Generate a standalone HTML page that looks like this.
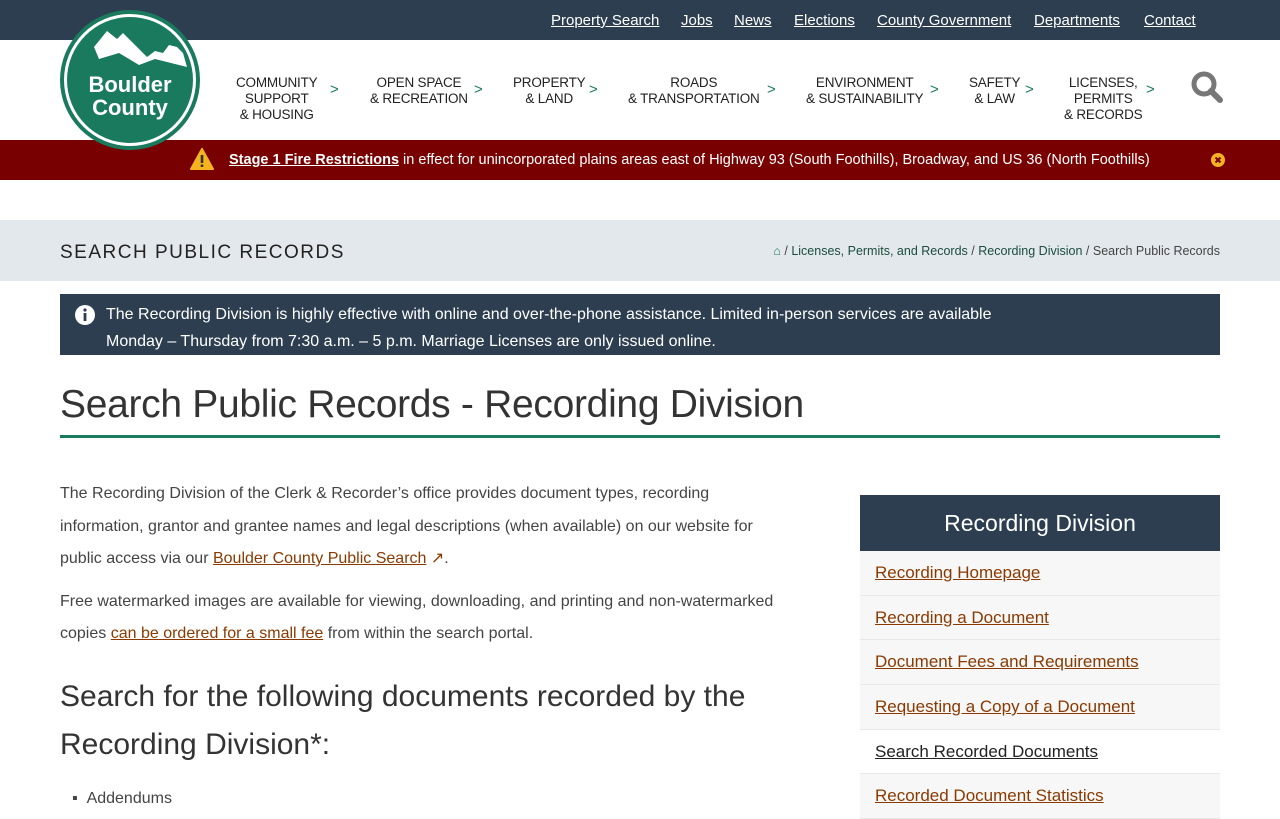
<!DOCTYPE html>
<html><head><meta charset="utf-8"><style>
*{margin:0;padding:0;box-sizing:border-box}
body{width:1280px;height:800px;overflow:hidden;font-family:"Liberation Sans",sans-serif;color:#333;background:#fff;position:relative}
a{color:inherit}
.top{height:40px;background:#2c3e4f;position:relative}
.top a{position:absolute;top:12px;color:#fff;font-size:15px;text-decoration:underline}
.nav{height:100px;position:relative}
.nav .it{position:absolute;top:35px;font-size:13.5px;color:#222;text-align:center;line-height:16px;letter-spacing:-.2px}
.nav .ch{position:absolute;top:41px;color:#1a7a5e;font-size:15px}
.alert{height:40px;background:#780000;color:#fff;position:relative;font-size:14.5px}
.hero{position:absolute;top:220px;left:0;width:1280px;height:61px;background:#e3e8ed}
.hero h2{position:absolute;left:60px;top:22px;font-weight:normal;font-size:19px;letter-spacing:1.5px;color:#222}
.bc{position:absolute;right:60px;top:24px;font-size:12.5px;color:#444}
.bc a{color:#1b4d3e}
.info{position:absolute;left:60px;top:294px;width:1160px;height:61px;background:#2c3e4f;color:#fff;font-size:16px;line-height:27px;padding:7px 0 0 46px}
h1{position:absolute;left:60px;top:383px;font-weight:normal;font-size:39px;color:#333;letter-spacing:-.3px}
.rule{position:absolute;left:60px;top:435px;width:1160px;height:3px;background:#1a7a5e}
.main{position:absolute;left:60px;top:478px;width:735px;font-size:16px;line-height:32.5px;color:#444}
.main a{color:#8a3a00}
.main h3{font-weight:normal;font-size:30px;line-height:48px;color:#333;margin-top:22px}
.side{position:absolute;left:860px;top:495px;width:360px}
.side .hd{height:56px;background:#2c3e4f;color:#fff;font-size:23px;text-align:center;line-height:56px}
.side .li{height:44.7px;border-bottom:1px solid #e8e8e8;background:#f7f7f7;padding-left:15px;font-size:17px;line-height:44px;color:#8a3a00}
.side .li a{text-decoration:underline}
.side .cur{background:#fff;color:#222}
</style></head><body>
<div class="top">
<a style="left:551px">Property Search</a><a style="left:681px">Jobs</a><a style="left:734px">News</a><a style="left:794px">Elections</a><a style="left:877px">County Government</a><a style="left:1034px">Departments</a><a style="left:1144px">Contact</a>
</div>
<div class="nav">
<div class="it" style="left:236px;top:35px">COMMUNITY<br>SUPPORT<br>&amp; HOUSING</div><span class="ch" style="left:330px">&gt;</span>
<div class="it" style="left:370px">OPEN SPACE<br>&amp; RECREATION</div><span class="ch" style="left:474px">&gt;</span>
<div class="it" style="left:513px">PROPERTY<br>&amp; LAND</div><span class="ch" style="left:589px">&gt;</span>
<div class="it" style="left:628px">ROADS<br>&amp; TRANSPORTATION</div><span class="ch" style="left:767px">&gt;</span>
<div class="it" style="left:806px">ENVIRONMENT<br>&amp; SUSTAINABILITY</div><span class="ch" style="left:930px">&gt;</span>
<div class="it" style="left:969px">SAFETY<br>&amp; LAW</div><span class="ch" style="left:1025px">&gt;</span>
<div class="it" style="left:1064px">LICENSES,<br>PERMITS<br>&amp; RECORDS</div><span class="ch" style="left:1146px">&gt;</span>
<svg style="position:absolute;left:1190px;top:30px" width="34" height="34" viewBox="0 0 34 34"><circle cx="14" cy="14" r="10" fill="none" stroke="#777" stroke-width="5"/><path d="M21 21 L30 30" stroke="#777" stroke-width="6" stroke-linecap="round"/></svg>
</div>
<div class="alert">
<svg style="position:absolute;left:190px;top:8px" width="24" height="22" viewBox="0 0 24 22"><path d="M12 1 L23 21 L1 21Z" fill="#f5b320" stroke="#f5b320" stroke-linejoin="round" stroke-width="2"/><rect x="10.7" y="7" width="2.6" height="8" fill="#333"/><rect x="10.7" y="16.5" width="2.6" height="2.5" fill="#333"/></svg>
<div style="position:absolute;left:229px;top:12px;white-space:nowrap"><b style="text-decoration:underline">Stage 1 Fire Restrictions</b> in effect for unincorporated plains areas east of Highway 93 (South Foothills), Broadway, and US 36 (North Foothills)</div>
<svg style="position:absolute;left:1211px;top:13px" width="14" height="14"><circle cx="7" cy="7" r="7" fill="#f5b320"/><path d="M4.5 4.5L9.5 9.5M9.5 4.5L4.5 9.5" stroke="#780000" stroke-width="2"/></svg>
</div>
<svg style="position:absolute;left:59px;top:9px;z-index:5" width="142" height="142" viewBox="0 0 142 142">
<circle cx="71" cy="71" r="70" fill="#1a7a5e"/><circle cx="71" cy="71" r="66" fill="#fff"/><circle cx="71" cy="71" r="63" fill="#1a7a5e"/>
<path d="M35 38 L48 22 L58 30 L64 24 L88 48 L96 42 L104 44 L110 36 L118 38 L124 44 L128 58 L96 50 L80 56 L60 44 L40 50 Z" fill="#fff"/>
<text x="71" y="83" font-family="Liberation Sans" font-weight="bold" font-size="22" fill="#fff" text-anchor="middle">Boulder</text>
<text x="71" y="106" font-family="Liberation Sans" font-weight="bold" font-size="22" fill="#fff" text-anchor="middle">County</text>
</svg>
<div class="hero"><h2>SEARCH PUBLIC RECORDS</h2>
<div class="bc"><span style="color:#1a7a5e">&#8962;</span> / <a>Licenses, Permits, and Records</a> / <a>Recording Division</a> / Search Public Records</div></div>
<div class="info"><svg style="position:absolute;left:14px;top:10px" width="22" height="22"><circle cx="11" cy="11" r="10" fill="#fff"/><rect x="9.6" y="9" width="2.8" height="8" fill="#2c3e4f"/><circle cx="11" cy="6" r="1.6" fill="#2c3e4f"/></svg>The Recording Division is highly effective with online and over-the-phone assistance. Limited in-person services are available<br>Monday – Thursday from 7:30 a.m. – 5 p.m. Marriage Licenses are only issued online.</div>
<h1>Search Public Records - Recording Division</h1>
<div class="rule"></div>
<div class="main">
<p>The Recording Division of the Clerk &amp; Recorder’s office provides document types, recording<br>information, grantor and grantee names and legal descriptions (when available) on our website for<br>public access via our <a style="text-decoration:underline">Boulder County Public Search</a> <span style="color:#8a3a00">&#8599;</span>.</p>
<p style="margin-top:10px">Free watermarked images are available for viewing, downloading, and printing and non-watermarked copies <a style="text-decoration:underline">can be ordered for a small fee</a> from within the search portal.</p>
<h3>Search for the following documents recorded by the Recording Division*:</h3>
<p style="margin-top:14px;padding-left:12px">▪ &nbsp;Addendums</p>
</div>
<div class="side">
<div class="hd">Recording Division</div>
<div class="li"><a>Recording Homepage</a></div>
<div class="li"><a>Recording a Document</a></div>
<div class="li"><a>Document Fees and Requirements</a></div>
<div class="li"><a>Requesting a Copy of a Document</a></div>
<div class="li cur"><a>Search Recorded Documents</a></div>
<div class="li"><a>Recorded Document Statistics</a></div>
</div>
</body></html>
